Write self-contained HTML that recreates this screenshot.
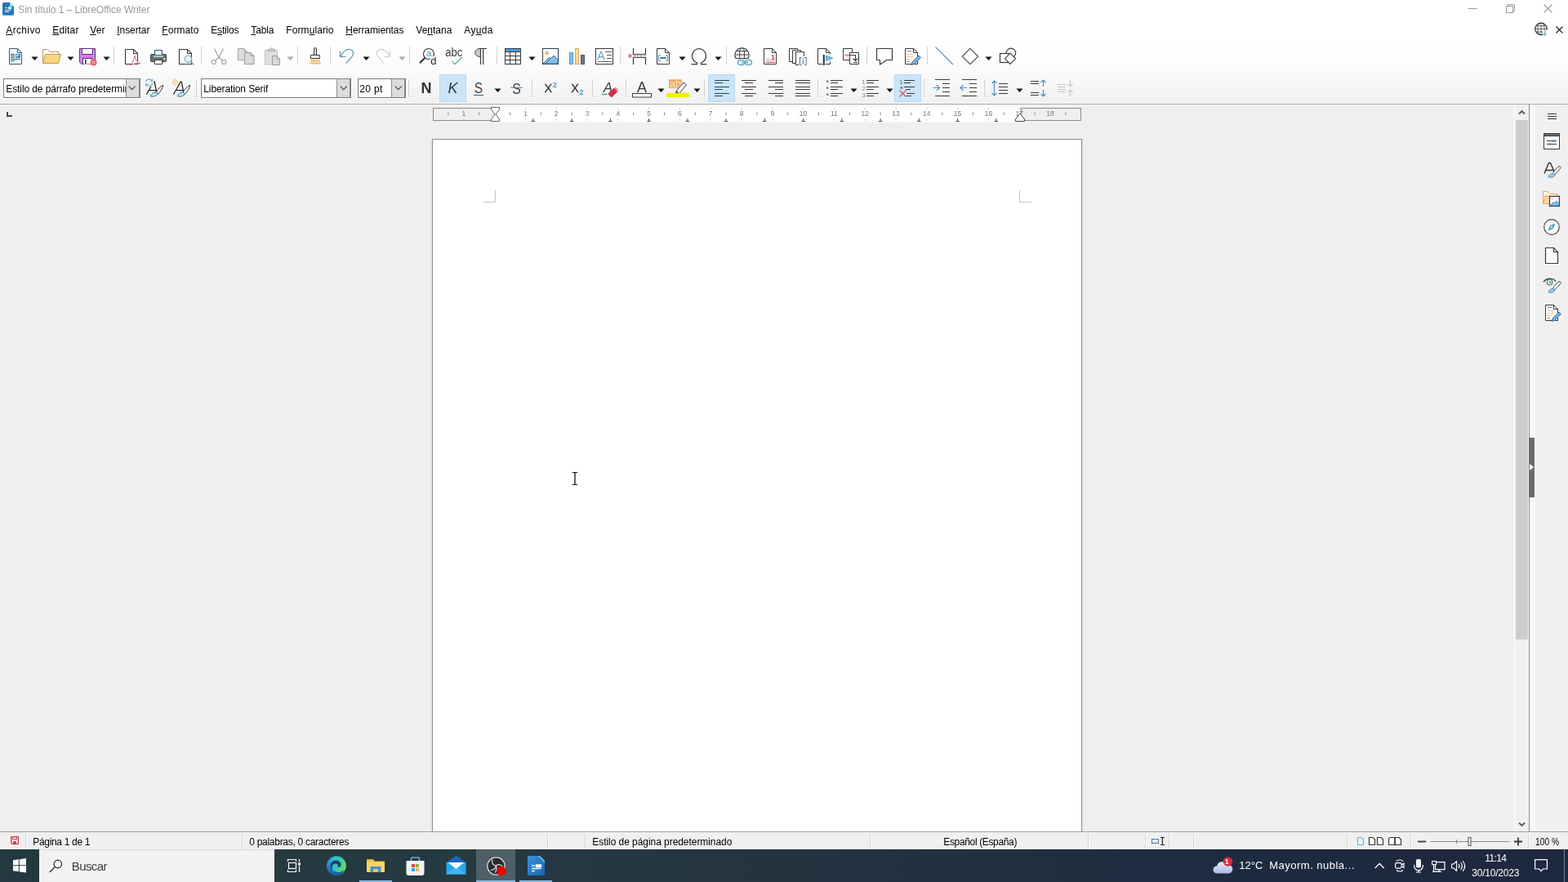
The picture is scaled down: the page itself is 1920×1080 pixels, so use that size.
<!DOCTYPE html>
<html lang="es"><head><meta charset="utf-8"><title>Sin título 1 – LibreOffice Writer</title>
<style>

*{box-sizing:border-box;margin:0;padding:0}
html,body{width:1920px;height:1080px;overflow:hidden;background:#fff;font-family:"Liberation Sans",sans-serif;}
body{position:relative}
.a{position:absolute}
.t{position:absolute;white-space:pre;}
.i{position:absolute;overflow:visible}
.sep{position:absolute;width:1px;background:#d2d2d2}
.hl{position:absolute;background:#cce4f7;border:1px solid #b9d8f1}
.combo{position:absolute;height:24px;background:#fff;border:1px solid #7a7a7a;box-shadow:0 0 0 1px rgba(255,255,255,.7)}
.combo .btn{position:absolute;right:0;top:0;bottom:0;width:17px;background:#dcdcdc;border-left:1px solid #909090;border-right:1px solid #8a8a8a}
.ssep{position:absolute;top:1021px;height:18px;width:2px;background:linear-gradient(90deg,#d4d4d4 50%,#fafafa 50%)}

</style></head>
<body>
<div class="a" style="left:0;top:50px;width:1920px;height:77px;background:linear-gradient(#ffffff 0%,#fdfdfd 30%,#f8f8f8 65%,#f0f0f0 100%)"></div><div class="a" style="left:0;top:125px;width:1920px;height:2px;background:#f6f6f6"></div><div class="a" style="left:0;top:127px;width:1920px;height:1px;background:#a8a8a8"></div><div class="a" style="left:0;top:128px;width:1920px;height:891px;background:#efefef"></div><div class="a" style="left:0;top:128px;width:1920px;height:1px;background:#f5f5f5"></div><div class="sep" style="left:139px;top:57px;height:22px"></div><div class="sep" style="left:246px;top:57px;height:22px"></div><div class="sep" style="left:364px;top:57px;height:22px"></div><div class="sep" style="left:404px;top:57px;height:22px"></div><div class="sep" style="left:501px;top:57px;height:22px"></div><div class="sep" style="left:608px;top:57px;height:22px"></div><div class="sep" style="left:759px;top:57px;height:22px"></div><div class="sep" style="left:889px;top:57px;height:22px"></div><div class="sep" style="left:1061px;top:57px;height:22px"></div><div class="sep" style="left:1135px;top:57px;height:22px"></div><div class="sep" style="left:240px;top:97px;height:22px"></div><div class="sep" style="left:500px;top:97px;height:22px"></div><div class="sep" style="left:651px;top:97px;height:22px"></div><div class="sep" style="left:725px;top:97px;height:22px"></div><div class="sep" style="left:766px;top:97px;height:22px"></div><div class="sep" style="left:862px;top:97px;height:22px"></div><div class="sep" style="left:1001px;top:97px;height:22px"></div><div class="sep" style="left:1131px;top:97px;height:22px"></div><div class="sep" style="left:1205px;top:97px;height:22px"></div><div class="hl" style="left:538px;top:91px;width:33px;height:34px"></div><div class="hl" style="left:867px;top:91px;width:33px;height:34px"></div><div class="hl" style="left:1095px;top:91px;width:33px;height:34px"></div><div class="combo" style="left:4px;top:96px;width:168px"><div class="btn"></div></div><div class="combo" style="left:246px;top:96px;width:184px"><div class="btn"></div></div><div class="combo" style="left:438px;top:96px;width:59px"><div class="btn"></div></div><div class="a" style="left:529px;top:170px;width:796px;height:849px;background:#fff;border:1px solid #8e8e8e;border-bottom:none;box-shadow:0 2px 0 2px #e5e5e5"></div><svg class="i" style="left:0;top:0" width="1856" height="300"><path d="M592 247.500h14.500v-14.500M1263 247.500h-14.500v-14.500" stroke="#c2c2c2" fill="none"/></svg><svg class="i" style="left:697.5px;top:577px" width="12" height="18" viewBox="0 0 12 18"><path d="M3 1.5h2.2l.8.8.8-.8H9M6 2v14M3 16.5h2.2l.8-.8.8.8H9" stroke="#000" stroke-width="1.2" fill="none"/></svg><div class="a" style="left:1856px;top:128px;width:16px;height:891px;background:#f0f0f0"></div><div class="a" style="left:1856px;top:147px;width:15px;height:636px;background:#cdcdcd"></div><svg class="i" style="left:1856px;top:128px" width="16" height="891"><path d="M4 11.5l3.5-3.5 3.500 3.5M4 879.5l3.5 3.5 3.5-3.5" stroke="#555" stroke-width="1.8" fill="none"/></svg><div class="a" style="left:1872px;top:128px;width:1px;height:891px;background:#8f8f8f"></div><div class="a" style="left:1873px;top:128px;width:47px;height:891px;background:#f0f0f0"></div><div class="a" style="left:1873px;top:128px;width:7px;height:891px;background:#f7f7f7"></div><div class="a" style="left:1853px;top:128px;width:3px;height:891px;background:#f5f5f5"></div><div class="a" style="left:1872px;top:536px;width:7px;height:73px;background:#6b6b6b"></div><svg class="i" style="left:1872px;top:566px" width="7" height="12"><path d="M1 2l5 4-5 4z" fill="#fff"/></svg><div class="a" style="left:0;top:1018px;width:1920px;height:1px;background:#a0a0a0"></div><div class="a" style="left:0;top:1019px;width:1920px;height:21px;background:#f0f0f0"></div><div class="ssep" style="left:31px"></div><div class="ssep" style="left:296px"></div><div class="ssep" style="left:670px"></div><div class="ssep" style="left:716px"></div><div class="ssep" style="left:1065px"></div><div class="ssep" style="left:1332px"></div><div class="ssep" style="left:1402px"></div><div class="ssep" style="left:1431px"></div><div class="ssep" style="left:1461px"></div><div class="ssep" style="left:1649px"></div><div class="ssep" style="left:1727px"></div><div class="ssep" style="left:1871px"></div><div class="a" style="left:0;top:1040px;width:1920px;height:40px;background:linear-gradient(90deg,#243840 0%,#263a42 30%,#22303f 60%,#1e2a40 80%,#1e2840 100%)"></div><div class="a" style="left:48px;top:1040px;width:288px;height:40px;background:#f2f2f2;border-top:1px solid #dcdcdc"></div><div class="a" style="left:583px;top:1040px;width:48px;height:40px;background:#4e5f67"></div><div class="a" style="left:440px;top:1078px;width:40px;height:2px;background:#8fb9e0"></div><div class="a" style="left:583px;top:1078px;width:48px;height:2px;background:#8fb9e0"></div><div class="a" style="left:636px;top:1078px;width:40px;height:2px;background:#8fb9e0"></div><div class="a" style="left:1915px;top:1040px;width:1px;height:40px;background:#7a8290"></div>
<div id="tx" style="position:absolute;left:0;top:0;width:1920px;height:1080px;will-change:transform">
<svg class="i" style="left:0;top:128px" width="1856" height="30" viewBox="0 128 1856 30"><rect x="606" y="128" width="643" height="22" fill="#f6f6f6"/><rect x="606" y="130.5" width="643" height="18.500" fill="#fff"/><rect x="530.5" y="132.5" width="75" height="15" fill="#efefef" stroke="#8c8c8c"/><rect x="1250.5" y="132.5" width="73" height="15" fill="#efefef" stroke="#8c8c8c"/><rect x="548.4" y="137.500" width="1" height="3.500" fill="#8a8a8a"/><text x="567.8" y="142" font-size="8.500" fill="#7a7a7a" text-anchor="middle" font-family="Liberation Sans, sans-serif">1</text><rect x="567.3" y="132" width="1" height="1.5" fill="#b0b0b0"/><rect x="567.3" y="146" width="1" height="1.5" fill="#b0b0b0"/><rect x="586.2" y="137.500" width="1" height="3.500" fill="#8a8a8a"/><rect x="624.0" y="137.500" width="1" height="3.500" fill="#8a8a8a"/><text x="643.4" y="142" font-size="8.500" fill="#7a7a7a" text-anchor="middle" font-family="Liberation Sans, sans-serif">1</text><rect x="642.9" y="132" width="1" height="1.5" fill="#b0b0b0"/><rect x="642.9" y="146" width="1" height="1.5" fill="#b0b0b0"/><rect x="661.8" y="137.500" width="1" height="3.500" fill="#8a8a8a"/><text x="681.2" y="142" font-size="8.500" fill="#7a7a7a" text-anchor="middle" font-family="Liberation Sans, sans-serif">2</text><rect x="680.7" y="132" width="1" height="1.5" fill="#b0b0b0"/><rect x="680.7" y="146" width="1" height="1.5" fill="#b0b0b0"/><rect x="699.6" y="137.500" width="1" height="3.500" fill="#8a8a8a"/><text x="719.0" y="142" font-size="8.500" fill="#7a7a7a" text-anchor="middle" font-family="Liberation Sans, sans-serif">3</text><rect x="718.5" y="132" width="1" height="1.5" fill="#b0b0b0"/><rect x="718.5" y="146" width="1" height="1.5" fill="#b0b0b0"/><rect x="737.4" y="137.500" width="1" height="3.500" fill="#8a8a8a"/><text x="756.8" y="142" font-size="8.500" fill="#7a7a7a" text-anchor="middle" font-family="Liberation Sans, sans-serif">4</text><rect x="756.3" y="132" width="1" height="1.5" fill="#b0b0b0"/><rect x="756.3" y="146" width="1" height="1.5" fill="#b0b0b0"/><rect x="775.2" y="137.500" width="1" height="3.500" fill="#8a8a8a"/><text x="794.6" y="142" font-size="8.500" fill="#7a7a7a" text-anchor="middle" font-family="Liberation Sans, sans-serif">5</text><rect x="794.1" y="132" width="1" height="1.5" fill="#b0b0b0"/><rect x="794.1" y="146" width="1" height="1.5" fill="#b0b0b0"/><rect x="813.0" y="137.500" width="1" height="3.500" fill="#8a8a8a"/><text x="832.4" y="142" font-size="8.500" fill="#7a7a7a" text-anchor="middle" font-family="Liberation Sans, sans-serif">6</text><rect x="831.9" y="132" width="1" height="1.5" fill="#b0b0b0"/><rect x="831.9" y="146" width="1" height="1.5" fill="#b0b0b0"/><rect x="850.8" y="137.500" width="1" height="3.500" fill="#8a8a8a"/><text x="870.2" y="142" font-size="8.500" fill="#7a7a7a" text-anchor="middle" font-family="Liberation Sans, sans-serif">7</text><rect x="869.7" y="132" width="1" height="1.5" fill="#b0b0b0"/><rect x="869.7" y="146" width="1" height="1.5" fill="#b0b0b0"/><rect x="888.6" y="137.500" width="1" height="3.500" fill="#8a8a8a"/><text x="908.0" y="142" font-size="8.500" fill="#7a7a7a" text-anchor="middle" font-family="Liberation Sans, sans-serif">8</text><rect x="907.5" y="132" width="1" height="1.5" fill="#b0b0b0"/><rect x="907.5" y="146" width="1" height="1.5" fill="#b0b0b0"/><rect x="926.4" y="137.500" width="1" height="3.500" fill="#8a8a8a"/><text x="945.8" y="142" font-size="8.500" fill="#7a7a7a" text-anchor="middle" font-family="Liberation Sans, sans-serif">9</text><rect x="945.3" y="132" width="1" height="1.5" fill="#b0b0b0"/><rect x="945.3" y="146" width="1" height="1.5" fill="#b0b0b0"/><rect x="964.2" y="137.500" width="1" height="3.500" fill="#8a8a8a"/><text x="983.6" y="142" font-size="8.500" fill="#7a7a7a" text-anchor="middle" font-family="Liberation Sans, sans-serif">10</text><rect x="983.1" y="132" width="1" height="1.5" fill="#b0b0b0"/><rect x="983.1" y="146" width="1" height="1.5" fill="#b0b0b0"/><rect x="1002.0" y="137.500" width="1" height="3.500" fill="#8a8a8a"/><text x="1021.4" y="142" font-size="8.500" fill="#7a7a7a" text-anchor="middle" font-family="Liberation Sans, sans-serif">11</text><rect x="1020.9" y="132" width="1" height="1.5" fill="#b0b0b0"/><rect x="1020.9" y="146" width="1" height="1.5" fill="#b0b0b0"/><rect x="1039.8" y="137.500" width="1" height="3.500" fill="#8a8a8a"/><text x="1059.2" y="142" font-size="8.500" fill="#7a7a7a" text-anchor="middle" font-family="Liberation Sans, sans-serif">12</text><rect x="1058.7" y="132" width="1" height="1.5" fill="#b0b0b0"/><rect x="1058.7" y="146" width="1" height="1.5" fill="#b0b0b0"/><rect x="1077.6" y="137.500" width="1" height="3.500" fill="#8a8a8a"/><text x="1097.0" y="142" font-size="8.500" fill="#7a7a7a" text-anchor="middle" font-family="Liberation Sans, sans-serif">13</text><rect x="1096.5" y="132" width="1" height="1.5" fill="#b0b0b0"/><rect x="1096.5" y="146" width="1" height="1.5" fill="#b0b0b0"/><rect x="1115.4" y="137.500" width="1" height="3.500" fill="#8a8a8a"/><text x="1134.8" y="142" font-size="8.500" fill="#7a7a7a" text-anchor="middle" font-family="Liberation Sans, sans-serif">14</text><rect x="1134.3" y="132" width="1" height="1.5" fill="#b0b0b0"/><rect x="1134.3" y="146" width="1" height="1.5" fill="#b0b0b0"/><rect x="1153.2" y="137.500" width="1" height="3.500" fill="#8a8a8a"/><text x="1172.6" y="142" font-size="8.500" fill="#7a7a7a" text-anchor="middle" font-family="Liberation Sans, sans-serif">15</text><rect x="1172.1" y="132" width="1" height="1.5" fill="#b0b0b0"/><rect x="1172.1" y="146" width="1" height="1.5" fill="#b0b0b0"/><rect x="1191.0" y="137.500" width="1" height="3.500" fill="#8a8a8a"/><text x="1210.4" y="142" font-size="8.500" fill="#7a7a7a" text-anchor="middle" font-family="Liberation Sans, sans-serif">16</text><rect x="1209.9" y="132" width="1" height="1.5" fill="#b0b0b0"/><rect x="1209.9" y="146" width="1" height="1.5" fill="#b0b0b0"/><rect x="1228.8" y="137.500" width="1" height="3.500" fill="#8a8a8a"/><text x="1248.2" y="142" font-size="8.500" fill="#7a7a7a" text-anchor="middle" font-family="Liberation Sans, sans-serif">17</text><rect x="1247.7" y="132" width="1" height="1.5" fill="#b0b0b0"/><rect x="1247.7" y="146" width="1" height="1.5" fill="#b0b0b0"/><rect x="1266.6" y="137.500" width="1" height="3.500" fill="#8a8a8a"/><text x="1286.0" y="142" font-size="8.500" fill="#7a7a7a" text-anchor="middle" font-family="Liberation Sans, sans-serif">18</text><rect x="1285.5" y="132" width="1" height="1.5" fill="#b0b0b0"/><rect x="1285.5" y="146" width="1" height="1.5" fill="#b0b0b0"/><rect x="1304.4" y="137.500" width="1" height="3.500" fill="#8a8a8a"/><path d="M650.6 148.5h4.400M652.9 145v3.500" stroke="#4a4a4a" stroke-width="1" fill="none"/><path d="M697.9 148.5h4.400M700.1 145v3.500" stroke="#4a4a4a" stroke-width="1" fill="none"/><path d="M745.1 148.5h4.400M747.4 145v3.500" stroke="#4a4a4a" stroke-width="1" fill="none"/><path d="M792.4 148.5h4.400M794.6 145v3.500" stroke="#4a4a4a" stroke-width="1" fill="none"/><path d="M839.6 148.5h4.400M841.9 145v3.500" stroke="#4a4a4a" stroke-width="1" fill="none"/><path d="M886.9 148.5h4.400M889.1 145v3.500" stroke="#4a4a4a" stroke-width="1" fill="none"/><path d="M934.1 148.5h4.400M936.4 145v3.500" stroke="#4a4a4a" stroke-width="1" fill="none"/><path d="M981.4 148.5h4.400M983.6 145v3.500" stroke="#4a4a4a" stroke-width="1" fill="none"/><path d="M1028.6 148.5h4.400M1030.8 145v3.500" stroke="#4a4a4a" stroke-width="1" fill="none"/><path d="M1075.9 148.5h4.400M1078.1 145v3.500" stroke="#4a4a4a" stroke-width="1" fill="none"/><path d="M1123.1 148.5h4.400M1125.3 145v3.500" stroke="#4a4a4a" stroke-width="1" fill="none"/><path d="M1170.4 148.5h4.400M1172.6 145v3.500" stroke="#4a4a4a" stroke-width="1" fill="none"/><path d="M1217.6 148.5h4.400M1219.8 145v3.500" stroke="#4a4a4a" stroke-width="1" fill="none"/><path d="M601.5 131.5h10v2.5l-4.5 6 4.5 6v2.5h-10v-2.5l4.5-6-4.5-6z" fill="#fff" stroke="#555" stroke-width="0.900" stroke-linejoin="round"/><path d="M1243.5 148.5h11v-2.5l-5-6.5h-1l-5 6.5z" fill="#fff" stroke="#444" stroke-width="1" stroke-linejoin="round"/><path d="M9 137v5h6" stroke="#484848" stroke-width="2" fill="none"/></svg>
<svg class="i" style="left:7px;top:57px" width="24" height="24" viewBox="0 0 24 24"><path d="M4.5 2.5h10l5 5v14h-15z" fill="#eef7fd" stroke="#2f5f7e"/><path d="M14.5 2.5v5h5" fill="none" stroke="#2f5f7e"/><path d="M6 9.5h5M6 11.5h5M6 13.5h5M6 15.5h12M6 17.5h5" stroke="#2f5f7e" fill="none"/><rect x="12.5" y="9.5" width="5" height="4" fill="#cfe6f7" stroke="#4a86b4"/><path d="M13 13l4-3.500v3.500z" fill="#4a86b4"/></svg>
<svg class="i" style="left:51px;top:57px" width="24" height="24" viewBox="0 0 24 24"><path d="M1.5 20.5v-17h5l4 3h10v3" fill="#fdfdfd" stroke="#b59a78"/><path d="M1.5 20.5l3-11h19l-3 11z" fill="#f9d57f" stroke="#c8964e" stroke-linejoin="round"/></svg>
<svg class="i" style="left:95px;top:57px" width="24" height="24" viewBox="0 0 24 24"><path d="M2.500 2.500h19v19h-16.500l-2.500-2.500z" fill="#d27be0" stroke="#5e2f75" stroke-linejoin="round"/><path d="M3 3h2.500v16h-2.500zM18.500 3h2.500v12h-2.500z" fill="#c595e8"/><path d="M5.500 2.500h13v7h-13z" fill="#fdf3fd" stroke="#5e2f75"/><path d="M6.500 21.500v-7h11v7" fill="#fff" stroke="#5e2f75"/><path d="M9.800 16v5" stroke="#4a2560" stroke-width="1.600"/><circle cx="19.600" cy="19.500" r="4" fill="#ea6468"/><circle cx="19.600" cy="19.500" r="2.100" fill="#f5a8a0"/><circle cx="19.600" cy="19.500" r="0.900" fill="#ea6468"/></svg>
<svg class="i" style="left:149px;top:57px" width="24" height="24" viewBox="0 0 24 24"><path d="M4.5 3.5h10l5 5v13h-15z" fill="#fff" stroke="#3a3a38" stroke-width="1.100"/><path d="M14.5 3.5v5h5" fill="none" stroke="#3a3a38" stroke-width="1.100"/><path d="M10.500 23c2.500-2.500 5-7.500 5.500-12c0.300 4 2 8 7 10c-4-1-9.500 0-12.500 2z" fill="#fff" stroke="#d9607a" stroke-width="1" stroke-linejoin="round"/></svg>
<svg class="i" style="left:182px;top:57px" width="24" height="24" viewBox="0 0 24 24"><path d="M7.500 10v-5.500h9v5.500" fill="#e8f4fb" stroke="#3a3a38"/><rect x="2.500" y="9.500" width="19" height="9" rx="0.800" fill="#6e6e6e" stroke="#3f4a4e"/><path d="M3 10h18v2h-18z" fill="#3f7f86"/><path d="M6 11.300h12v1.500h-12z" fill="#bfe8ee"/><path d="M7.500 10v-5.500h9v5.500" fill="#e8f4fb" stroke="#3a5a66"/><rect x="18" y="14.500" width="2.500" height="1.500" fill="#fff"/><path d="M7.500 16.500h9v5h-9z" fill="#fff" stroke="#3a3a38"/></svg>
<svg class="i" style="left:215px;top:57px" width="24" height="24" viewBox="0 0 24 24"><path d="M4.5 3.5h10l5 5v13h-15z" fill="#fff" stroke="#3a3a38" stroke-width="1.100"/><path d="M14.5 3.5v5h5" fill="none" stroke="#3a3a38" stroke-width="1.100"/><circle cx="15.400" cy="15.200" r="4.200" fill="#e3f3f8" stroke="#7da7b8" stroke-width="1.200"/><path d="M18.400 18.200l4.300 4.300" stroke="#7da7b8" stroke-width="1.300"/></svg>
<svg class="i" style="left:256px;top:57px" width="24" height="24" viewBox="0 0 24 24"><path d="M6.500 2.700l5.500 10.600 4.300 3.800M17.500 2.700l-5.500 10.600-4.300 3.800" stroke="#a9a9a9" stroke-width="1.400" fill="none" stroke-linejoin="round"/><circle cx="5.800" cy="18.900" r="2.600" fill="#fdfdfd" stroke="#a9a9a9" stroke-width="1.200"/><circle cx="18.200" cy="18.900" r="2.600" fill="#fdfdfd" stroke="#a9a9a9" stroke-width="1.200"/></svg>
<svg class="i" style="left:288.5px;top:57px" width="24" height="24" viewBox="0 0 24 24"><path d="M2.500 2.500h7.500l3.500 3.500v10.500h-11z" fill="#dcdcdc" stroke="#a2a2a2"/><path d="M10 2.500v3.500h3.500" fill="none" stroke="#b5b5b5"/><path d="M10.500 7.500h7.500l4 4v10h-11.500z" fill="#dadada" stroke="#9a9a9a"/><path d="M18 7.500v4h4" fill="none" stroke="#9a9a9a"/></svg>
<svg class="i" style="left:321px;top:57px" width="24" height="24" viewBox="0 0 24 24"><path d="M3.500 4.500h15v17.500h-15z" fill="#dedede" stroke="#c2c2c2"/><path d="M7.500 5.500v-2h2.200c0-2.200 3.600-2.200 3.600 0h2.200v2z" fill="#cfcfcf" stroke="#a8a8a8"/><path d="M12.500 11.500h5.500l3.500 3.500v7.500h-9z" fill="#d8d8d8" stroke="#9c9c9c"/><path d="M18 11.500v3.500h3.500" fill="none" stroke="#9c9c9c"/></svg>
<svg class="i" style="left:373.7px;top:57px" width="24" height="24" viewBox="0 0 24 24"><path d="M10.500 10.500v-7.500a1.500 1.500 0 0 1 3 0v7.500" fill="#d8d8d8" stroke="#3a3a38"/><path d="M6.500 10.500h11v4h-11z" fill="#fff" stroke="#3a3a38" stroke-linejoin="round"/><path d="M6.500 15h11l1 7h-13z" fill="#f9d9b0"/><path d="M6 17.500h12.200M5.600 20.500h13" stroke="#efb273" stroke-width="1.200"/></svg>
<svg class="i" style="left:413px;top:57px" width="24" height="24" viewBox="0 0 24 24"><path d="M3.500 5.500v7h7" fill="none" stroke="#5d8eae" stroke-width="1.150"/><path d="M3.800 12.200c3-6 8-10 12.500-8.500c4.500 1.600 4 6.500 1 9.500l-6.500 7.500" fill="none" stroke="#5d8eae" stroke-width="1.150"/></svg>
<svg class="i" style="left:457px;top:57px" width="24" height="24" viewBox="0 0 24 24"><path d="M20.500 5.500v7h-7" fill="none" stroke="#cdcdcd" stroke-width="1.150"/><path d="M20.200 12.200c-3-6-8-10-12.500-8.500c-4.500 1.600-4 6.500-1 9.500l6.500 7.500" fill="none" stroke="#cdcdcd" stroke-width="1.150"/></svg>
<svg class="i" style="left:511px;top:57px" width="24" height="24" viewBox="0 0 24 24"><circle cx="14" cy="9" r="6.500" fill="#fff" stroke="#3a3a38" stroke-width="1.200"/><path d="M9.300 13.800l-6.300 6.400" stroke="#3a3a38" stroke-width="2.200"/><text x="14.300" y="12" font-size="11.500" text-anchor="middle" fill="#3f8ea8" font-family="Liberation Sans, sans-serif">a</text><rect x="16" y="12" width="8" height="10" fill="#fcfcfc"/><text x="19.800" y="21.500" font-size="13" text-anchor="middle" fill="#222" font-family="Liberation Sans, sans-serif">d</text></svg>
<svg class="i" style="left:543.5px;top:57px" width="24" height="24" viewBox="0 0 24 24"><text transform="translate(11.800 11.600) scale(0.900 1)" font-size="14.500" text-anchor="middle" fill="#3a3a38" font-family="Liberation Sans, sans-serif">abc</text><path d="M9.500 18l3.500 3.500l9-8.500" fill="none" stroke="#68b98c" stroke-width="1.400"/></svg>
<svg class="i" style="left:577px;top:57px" width="24" height="24" viewBox="0 0 24 24"><path d="M11.500 12.500c-9 0-9-10 0-10z" fill="#c9c9c9" stroke="#3a3a38"/><path d="M9 2.500h10M11.500 2.500v19.500M14.700 2.500v19.500" stroke="#3a3a38" fill="none" stroke-width="1.200"/></svg>
<svg class="i" style="left:616px;top:57px" width="24" height="24" viewBox="0 0 24 24"><rect x="2.500" y="2.500" width="19" height="19" fill="#fff" stroke="#3a3a38"/><rect x="3" y="3" width="18" height="3" fill="#4b9ad6"/><path d="M2.500 6.500h19M2.500 11.500h19M2.500 16.500h19M8.500 6.500v15M15.500 6.500v15" stroke="#3a3a38" fill="none"/></svg>
<svg class="i" style="left:662px;top:57px" width="24" height="24" viewBox="0 0 24 24"><rect x="2.500" y="2.500" width="19" height="19" fill="#fcfdff" stroke="#2f3f4e"/><circle cx="7.700" cy="8" r="2" fill="#f6d9a6" stroke="#c9a064"/><path d="M3 21l7.500-8 2 2 3.500-4 5 5v5z" fill="#83beec" stroke="#3d74a4" stroke-linejoin="round"/><path d="M6 21l7-7" stroke="#3d74a4" fill="none"/></svg>
<svg class="i" style="left:694.3px;top:57px" width="24" height="24" viewBox="0 0 24 24"><rect x="3.500" y="7.500" width="4" height="14" fill="#83beec" stroke="#4a98d3"/><rect x="10.500" y="2.500" width="4" height="19" fill="#f8db9f" stroke="#e3a95c"/><rect x="17.500" y="10.500" width="4" height="11" fill="#75757d" stroke="#54545c"/></svg>
<svg class="i" style="left:728px;top:57px" width="24" height="24" viewBox="0 0 24 24"><rect x="1.500" y="2.500" width="21" height="19" fill="#fcfeff" stroke="#3a3a38"/><text x="8" y="16" font-size="14" text-anchor="middle" fill="#6a9dbb" font-family="Liberation Sans, sans-serif">A</text><path d="M13 6.500h8M15 10.500h6M15 14.500h6M4 18.500h17" stroke="#55606a" fill="none"/></svg>
<svg class="i" style="left:768px;top:57px" width="24" height="24" viewBox="0 0 24 24"><path d="M7.500 2v7.500h15v-7.500M7.500 22v-8.500h15v8.500" fill="none" stroke="#3a3a38" stroke-width="1.200"/><path d="M8 11.500h15" stroke="#a83246" stroke-dasharray="2.500 1.500" fill="none"/><path d="M2.300 9.200l3.500 2.300-3.500 2.300z" fill="#f4b6bd" stroke="#d24a5c"/></svg>
<svg class="i" style="left:800px;top:57px" width="24" height="24" viewBox="0 0 24 24"><path d="M4.5 2.5h10l5 5v14h-15z" fill="#fff" stroke="#3a3a38"/><path d="M14.5 2.5v5h5" fill="none" stroke="#3a3a38"/><path d="M9 10.500h-1.500a1 1 0 0 0-1 1v5a1 1 0 0 0 1 1h1.500M15 10.500h1.500a1 1 0 0 1 1 1v5a1 1 0 0 1-1 1h-1.500" fill="none" stroke="#5b9ab2" stroke-width="1.200"/><path d="M8.300 14h7.400" stroke="#3f7f97" stroke-width="2.100"/></svg>
<svg class="i" style="left:844px;top:57px" width="24" height="24" viewBox="0 0 24 24"><path d="M2.500 21.500h7v-1.500c-3.500-1.500-6-4.500-6-8.500c0-5 4-9 8.500-9s8.500 4 8.500 9c0 4-2.500 7-6 8.500v1.500h7" fill="none" stroke="#3a3a38" stroke-width="1.250"/></svg>
<svg class="i" style="left:898px;top:57px" width="24" height="24" viewBox="0 0 24 24"><path d="M3.100 14.500a8.500 8.500 0 1 1 14.800 0z" fill="#fff" stroke="#3a3a38" stroke-width="1.200"/><path d="M2.800 10h15.400M4.500 5.600h12M9.500 2.200c-1.500 1.500-1.800 3-1.800 5v7.300M11.500 2.200c1.500 1.500 1.900 3 1.900 5v7.300" fill="none" stroke="#3a3a38"/><rect x="5.500" y="16.500" width="8" height="6" rx="3" fill="#dff1f7" stroke="#6badc4" stroke-width="1.300"/><rect x="14.500" y="16.500" width="8" height="6" rx="3" fill="#dff1f7" stroke="#6badc4" stroke-width="1.300"/><path d="M10 19.500h8" stroke="#6badc4" stroke-width="1.500"/></svg>
<svg class="i" style="left:931px;top:57px" width="24" height="24" viewBox="0 0 24 24"><path d="M4.5 2.5h10l5 5v14h-15z" fill="#fff" stroke="#3a3a38"/><path d="M14.5 2.5v5h5" fill="none" stroke="#3a3a38"/><text x="15.400" y="15.500" font-size="9.500" font-weight="700" text-anchor="middle" fill="#c9475e" font-family="Liberation Sans, sans-serif">1</text><path d="M7 15.500h5" stroke="#b9b9b9"/><path d="M7 17.500h11" stroke="#e8a3ae"/><path d="M7 19.500h11" stroke="#c9475e"/></svg>
<svg class="i" style="left:964px;top:57px" width="24" height="24" viewBox="0 0 24 24"><path d="M2.500 2.500h10v16h-10z" fill="#fff" stroke="#3a3a38"/><path d="M6.500 4.500h10v16h-10z" fill="#fff" stroke="#3a3a38"/><path d="M10.500 6.500h10v16h-10z" fill="#fff" stroke="#3a3a38"/><rect x="14" y="12" width="10" height="12" fill="#f7fbfe"/><path d="M17.500 13.500h-2v9h2M21.200 13.500h2v9h-2" fill="none" stroke="#5f7f96" stroke-width="1.100"/><path d="M19.400 16.500v5M19.400 14v1.300" stroke="#5f7f96" stroke-width="1.200"/></svg>
<svg class="i" style="left:997px;top:57px" width="24" height="24" viewBox="0 0 24 24"><path d="M4.5 2.5h10l5 5v14h-15z" fill="#fff" stroke="#3a3a38"/><path d="M14.5 2.5v5h5" fill="none" stroke="#3a3a38"/><rect x="10" y="9.500" width="14" height="8.800" fill="#fbfdff"/><rect x="10" y="18" width="4" height="5" fill="#fbfdff"/><path d="M11.800 10v13" stroke="#2c2c2c" stroke-width="2"/><path d="M14.600 11.200l8 3.100-8 3.100z" fill="#83beec" stroke="#4a98d3"/></svg>
<svg class="i" style="left:1030px;top:57px" width="24" height="24" viewBox="0 0 24 24"><path d="M2.500 2.500h11v14h-11z" fill="#fff" stroke="#3a3a38"/><path d="M4.500 12.500h5" stroke="#f2c0c7"/><path d="M10.500 7.500h11v14h-11z" fill="#fff" stroke="#3a3a38"/><path d="M4.500 10.500h6" stroke="#d8566c" stroke-width="1.200"/><path d="M10.500 10.500h7v6.500M14.500 14.500l3 3 3-3M15 19.500h5" fill="none" stroke="#3a3a38" stroke-width="1.100"/></svg>
<svg class="i" style="left:1071px;top:57px" width="24" height="24" viewBox="0 0 24 24"><path d="M2.500 2.500h19v14h-7l-8 5.500v-5.500h-4z" fill="#fff" stroke="#3a3a38" stroke-width="1.200" stroke-linejoin="round"/></svg>
<svg class="i" style="left:1104px;top:57px" width="24" height="24" viewBox="0 0 24 24"><path d="M4.5 2.5h10l5 5v14h-15z" fill="#fff" stroke="#3a3a38"/><path d="M14.5 2.5v5h5" fill="none" stroke="#3a3a38"/><path d="M7 5.500h5M7 18.500h3" stroke="#7a7a7a"/><path d="M7 9.500h8M7 12.500h7M7 15.500h5" stroke="#f0b070" stroke-dasharray="3 1"/><path d="M12 22.500l1-3.500 8-8 2.500 2.500-8 8z" fill="#7db0dc" stroke="#3f77a8" stroke-linejoin="round"/></svg>
<svg class="i" style="left:1144px;top:57px" width="24" height="24" viewBox="0 0 24 24"><path d="M1.400 0.300l21.500 21.700" stroke="#5a93b8" stroke-width="1.150"/></svg>
<svg class="i" style="left:1176px;top:57px" width="24" height="24" viewBox="0 0 24 24"><path d="M12 2.300l9.700 9.700-9.700 9.700-9.700-9.700z" fill="#fff" stroke="#555" stroke-width="1.200"/></svg>
<svg class="i" style="left:1222px;top:57px" width="24" height="24" viewBox="0 0 24 24"><circle cx="15.900" cy="7.900" r="5.800" fill="#fff" stroke="#3a3a38" stroke-width="1.100"/><rect x="2.500" y="8.500" width="11.500" height="11" fill="#fff" stroke="#3a3a38" stroke-width="1.200"/><path d="M15 8.200l6.600 6.600-6.600 6.600-6.600-6.600z" fill="#fff" stroke="#3a3a38" stroke-width="1.100"/></svg>
<svg class="i" style="left:177px;top:96px" width="24" height="24" viewBox="0 0 24 24"><path d="M2.300 19.700l8.900-15.500h1l2.400 11.800M6 14.600h8" fill="none" stroke="#2b2b2b" stroke-width="1.300"/><path d="M22.700 8.200c-4.200 2.300-7.200 5.800-8.400 9.100l2.200 1.700c3-2.500 5.500-6.500 6.200-10.800z" fill="#fff" stroke="#2b2b2b"/><path d="M14.200 17c-3.200-0.500-5.700 2-7 4.900c3.800 0.900 7.800-0.100 9.100-2.900z" fill="#c2e0f3" stroke="#2f79a8"/><circle cx="5.600" cy="5.100" r="5.600" fill="#fbfbfb"/><path d="M1.500 4.500a4.200 4.200 0 0 1 7.500-1.800M9.700 5.700a4.200 4.200 0 0 1-7.500 1.800" fill="none" stroke="#7fb5c9" stroke-width="1.300"/><path d="M9.600 0.500v2.800h-2.800M1.600 9.700v-2.800h2.800" fill="none" stroke="#7fb5c9" stroke-width="1.200"/></svg>
<svg class="i" style="left:210px;top:96px" width="24" height="24" viewBox="0 0 24 24"><path d="M2.300 19.700l8.900-15.500h1l2.400 11.800M6 14.600h8" fill="none" stroke="#2b2b2b" stroke-width="1.300"/><path d="M22.700 8.200c-4.200 2.300-7.200 5.800-8.400 9.100l2.200 1.700c3-2.500 5.500-6.500 6.200-10.800z" fill="#fff" stroke="#2b2b2b"/><path d="M14.200 17c-3.200-0.500-5.700 2-7 4.900c3.800 0.900 7.800-0.100 9.100-2.900z" fill="#c2e0f3" stroke="#2f79a8"/><circle cx="4.300" cy="4.400" r="4.800" fill="#fbfbfb"/><path d="M4.300 0v8.800M0 4.400h8.600M1.200 1.300l6.200 6.200M7.400 1.300l-6.200 6.200" stroke="#f0b070" stroke-width="1"/><circle cx="4.300" cy="4.400" r="1.800" fill="#fde3c0"/></svg>
<svg class="i" style="left:510px;top:96px" width="24" height="24" viewBox="0 0 24 24"><text x="12" y="18.300" font-size="18" font-weight="700" text-anchor="middle" fill="#333" font-family="Liberation Sans, sans-serif">N</text></svg>
<svg class="i" style="left:542.5px;top:96px" width="24" height="24" viewBox="0 0 24 24"><text x="11.500" y="18.300" font-size="18" font-style="italic" text-anchor="middle" fill="#2d3c4a" font-family="Liberation Sans, sans-serif">K</text></svg>
<svg class="i" style="left:574px;top:96px" width="24" height="24" viewBox="0 0 24 24"><text transform="translate(12 18.400) scale(0.840 1)" font-size="18.500" text-anchor="middle" fill="#3a3a38" font-family="Liberation Sans, sans-serif">S</text><path d="M6 20.500h12" stroke="#3a6f90" stroke-width="1.200"/></svg>
<svg class="i" style="left:620px;top:96px" width="24" height="24" viewBox="0 0 24 24"><text transform="translate(12.500 18.500) scale(0.860 1)" font-size="18.500" text-anchor="middle" fill="#3a3a38" font-family="Liberation Sans, sans-serif">S</text><path d="M5 11.300h14.500" stroke="#4f84a4" stroke-width="1.100"/></svg>
<svg class="i" style="left:662px;top:96px" width="24" height="24" viewBox="0 0 24 24"><text x="9.300" y="16.800" font-size="14.500" text-anchor="middle" fill="#3a3a38" stroke="#3a3a38" stroke-width="0.300" font-family="Liberation Sans, sans-serif">X</text><text x="17.300" y="11" font-size="9.500" font-weight="700" text-anchor="middle" fill="#4f9ac6" font-family="Liberation Sans, sans-serif">2</text></svg>
<svg class="i" style="left:695px;top:96px" width="24" height="24" viewBox="0 0 24 24"><text x="9" y="16.800" font-size="14.500" text-anchor="middle" fill="#3a3a38" stroke="#3a3a38" stroke-width="0.300" font-family="Liberation Sans, sans-serif">X</text><text x="16.800" y="19.500" font-size="9.500" font-weight="700" text-anchor="middle" fill="#4f9ac6" font-family="Liberation Sans, sans-serif">2</text></svg>
<svg class="i" style="left:735px;top:96px" width="24" height="24" viewBox="0 0 24 24"><text x="9.500" y="17" font-size="17" font-style="italic" text-anchor="middle" fill="#3a3a38" font-family="Liberation Sans, sans-serif">A</text><path d="M1.700 19.500h7" stroke="#3f8f9f" stroke-width="1.200"/><g transform="translate(-1.200 -1)"><path d="M11 20l7-7 4 4-7 7z" fill="#d42e48" stroke="#b92b44" stroke-linejoin="round"/><path d="M18 13l2-1.500 3.500 3.500-1.500 2z" fill="#f08a98"/></g></svg>
<svg class="i" style="left:774px;top:96px" width="24" height="24" viewBox="0 0 24 24"><text x="12" y="16.800" font-size="18" text-anchor="middle" fill="#3a3a38" font-family="Liberation Sans, sans-serif">A</text><rect x="0.500" y="18.500" width="23" height="4.500" fill="#fff" stroke="#3a3a38"/></svg>
<svg class="i" style="left:818px;top:96px" width="24" height="24" viewBox="0 0 24 24"><rect x="1" y="1.200" width="15.700" height="11" fill="#f1a85b"/><text x="9" y="10.800" font-size="12.500" text-anchor="middle" fill="#fbe6cf" font-family="Liberation Sans, sans-serif">ab</text><path d="M10 15.500l9-10.500 3.500 3-9 10.500z" fill="#fff" stroke="#3a3a38" stroke-linejoin="round"/><path d="M10 15.500l-2 4.500 5.500-1.500z" fill="#2b2b2b"/><rect x="-1.600" y="17.800" width="27.400" height="5.500" rx="1" fill="#f2f200"/></svg>
<svg class="i" style="left:872px;top:96px" width="24" height="24" viewBox="0 0 24 24"><rect x="3" y="2" width="18" height="1" fill="#23455f"/><rect x="3" y="5" width="10" height="1" fill="#23455f"/><rect x="3" y="10" width="18" height="1" fill="#23455f"/><rect x="3" y="13" width="10" height="1" fill="#23455f"/><rect x="3" y="18" width="18" height="1" fill="#23455f"/><rect x="3" y="21" width="10" height="1" fill="#23455f"/></svg>
<svg class="i" style="left:905px;top:96px" width="24" height="24" viewBox="0 0 24 24"><rect x="3" y="2" width="18" height="1" fill="#3a3a38"/><rect x="7" y="5" width="10" height="1" fill="#3a3a38"/><rect x="3" y="10" width="18" height="1" fill="#3a3a38"/><rect x="7" y="13" width="10" height="1" fill="#3a3a38"/><rect x="3" y="18" width="18" height="1" fill="#3a3a38"/><rect x="7" y="21" width="10" height="1" fill="#3a3a38"/></svg>
<svg class="i" style="left:938px;top:96px" width="24" height="24" viewBox="0 0 24 24"><rect x="3" y="2" width="18" height="1" fill="#3a3a38"/><rect x="11" y="5" width="10" height="1" fill="#3a3a38"/><rect x="3" y="10" width="18" height="1" fill="#3a3a38"/><rect x="11" y="13" width="10" height="1" fill="#3a3a38"/><rect x="3" y="18" width="18" height="1" fill="#3a3a38"/><rect x="11" y="21" width="10" height="1" fill="#3a3a38"/></svg>
<svg class="i" style="left:971px;top:96px" width="24" height="24" viewBox="0 0 24 24"><rect x="3" y="2" width="18" height="1" fill="#3a3a38"/><rect x="3" y="5" width="18" height="1" fill="#3a3a38"/><rect x="3" y="10" width="18" height="1" fill="#3a3a38"/><rect x="3" y="13" width="18" height="1" fill="#3a3a38"/><rect x="3" y="18" width="18" height="1" fill="#3a3a38"/><rect x="3" y="21" width="18" height="1" fill="#3a3a38"/></svg>
<svg class="i" style="left:1010px;top:96px" width="24" height="24" viewBox="0 0 24 24"><rect x="7" y="2" width="15" height="1" fill="#3a3a38"/><rect x="7" y="5" width="9" height="1" fill="#3a3a38"/><rect x="7" y="10" width="15" height="1" fill="#3a3a38"/><rect x="7" y="13" width="9" height="1" fill="#3a3a38"/><rect x="7" y="18" width="15" height="1" fill="#3a3a38"/><rect x="7" y="21" width="9" height="1" fill="#3a3a38"/><circle cx="3.200" cy="3.700" r="1.400" fill="#5b87a8"/><circle cx="3.200" cy="11.700" r="1.400" fill="#5b87a8"/><circle cx="3.200" cy="19.700" r="1.400" fill="#5b87a8"/></svg>
<svg class="i" style="left:1054px;top:96px" width="24" height="24" viewBox="0 0 24 24"><rect x="7" y="2" width="15" height="1" fill="#3a3a38"/><rect x="7" y="5" width="9" height="1" fill="#3a3a38"/><rect x="7" y="10" width="15" height="1" fill="#3a3a38"/><rect x="7" y="13" width="9" height="1" fill="#3a3a38"/><rect x="7" y="18" width="15" height="1" fill="#3a3a38"/><rect x="7" y="21" width="9" height="1" fill="#3a3a38"/><text x="3.500" y="7" font-size="7.500" text-anchor="middle" fill="#5b87a8" font-family="Liberation Sans, sans-serif">1</text><text x="3.500" y="15" font-size="7.500" text-anchor="middle" fill="#5b87a8" font-family="Liberation Sans, sans-serif">2</text><text x="3.500" y="23" font-size="7.500" text-anchor="middle" fill="#5b87a8" font-family="Liberation Sans, sans-serif">3</text></svg>
<svg class="i" style="left:1100px;top:96px" width="24" height="24" viewBox="0 0 24 24"><rect x="7" y="2" width="13" height="1" fill="#3a3a38"/><rect x="7" y="5" width="8" height="1" fill="#3a3a38"/><rect x="7" y="10" width="13" height="1" fill="#3a3a38"/><rect x="9" y="13" width="6" height="1" fill="#3a3a38"/><rect x="10" y="18" width="10" height="1" fill="#3a3a38"/><rect x="10" y="21" width="6" height="1" fill="#3a3a38"/><text x="3.500" y="7" font-size="7.500" text-anchor="middle" fill="#3f6f92" font-family="Liberation Sans, sans-serif">1</text><circle cx="4" cy="11.500" r="1.300" fill="#3f6f92"/><path d="M1.500 14.500l8 8M9.500 14.500l-8 8" stroke="#d4536a" stroke-width="1.200"/></svg>
<svg class="i" style="left:1141px;top:96px" width="24" height="24" viewBox="0 0 24 24"><rect x="4" y="1" width="18" height="1" fill="#3a3a38"/><rect x="13" y="6" width="9" height="1" fill="#3a3a38"/><rect x="13" y="11" width="9" height="1" fill="#3a3a38"/><rect x="13" y="16" width="9" height="1" fill="#3a3a38"/><rect x="4" y="21" width="18" height="1" fill="#3a3a38"/><path d="M1.500 11.500h8M6 8l3.500 3.500-3.500 3.500" fill="none" stroke="#4a93bd" stroke-width="1.200"/></svg>
<svg class="i" style="left:1174px;top:96px" width="24" height="24" viewBox="0 0 24 24"><rect x="4" y="1" width="18" height="1" fill="#3a3a38"/><rect x="13" y="6" width="9" height="1" fill="#3a3a38"/><rect x="13" y="11" width="9" height="1" fill="#3a3a38"/><rect x="13" y="16" width="9" height="1" fill="#3a3a38"/><rect x="4" y="21" width="18" height="1" fill="#3a3a38"/><path d="M2 11.500h8M5.500 8l-3.500 3.500 3.500 3.500" fill="none" stroke="#4a93bd" stroke-width="1.200"/></svg>
<svg class="i" style="left:1212px;top:96px" width="24" height="24" viewBox="0 0 24 24"><rect x="11" y="6" width="11" height="1" fill="#3a3a38"/><rect x="11" y="10" width="11" height="1" fill="#3a3a38"/><rect x="11" y="14" width="11" height="1" fill="#3a3a38"/><rect x="11" y="18" width="11" height="1" fill="#3a3a38"/><path d="M5.500 3v18M2.500 6l3-3 3 3M2.500 18l3 3 3-3" fill="none" stroke="#4a93bd" stroke-width="1.200"/></svg>
<svg class="i" style="left:1260px;top:96px" width="24" height="24" viewBox="0 0 24 24"><rect x="2" y="3" width="10" height="1" fill="#3a3a38"/><rect x="2" y="6" width="10" height="1" fill="#3a3a38"/><rect x="2" y="17" width="10" height="1" fill="#3a3a38"/><rect x="2" y="20" width="10" height="1" fill="#3a3a38"/><path d="M17.500 2v8M14.500 5l3-3 3 3M17.500 22v-8M14.500 19l3 3 3-3" fill="none" stroke="#4a93bd" stroke-width="1.200"/></svg>
<svg class="i" style="left:1293px;top:96px" width="24" height="24" viewBox="0 0 24 24"><rect x="2" y="7" width="10" height="1" fill="#c4c4c4"/><rect x="2" y="10" width="10" height="1" fill="#c4c4c4"/><rect x="2" y="13" width="10" height="1" fill="#c4c4c4"/><rect x="2" y="16" width="10" height="1" fill="#c4c4c4"/><path d="M17.500 2v8M14.500 7l3 3 3-3M17.500 22v-8M14.500 17l3-3 3 3" fill="none" stroke="#cbcbcb" stroke-width="1.200"/></svg>
<svg class="i" style="left:37.5px;top:68.5px" width="9" height="6" viewBox="0 0 9 6"><path d="M0.5 0.5h8l-4 4.5z" fill="#111"/></svg>
<svg class="i" style="left:81.5px;top:68.5px" width="9" height="6" viewBox="0 0 9 6"><path d="M0.5 0.5h8l-4 4.5z" fill="#111"/></svg>
<svg class="i" style="left:125.5px;top:68.5px" width="9" height="6" viewBox="0 0 9 6"><path d="M0.5 0.5h8l-4 4.5z" fill="#111"/></svg>
<svg class="i" style="left:443.5px;top:68.5px" width="9" height="6" viewBox="0 0 9 6"><path d="M0.5 0.5h8l-4 4.5z" fill="#111"/></svg>
<svg class="i" style="left:647.0px;top:68.5px" width="9" height="6" viewBox="0 0 9 6"><path d="M0.5 0.5h8l-4 4.5z" fill="#111"/></svg>
<svg class="i" style="left:830.8px;top:68.5px" width="9" height="6" viewBox="0 0 9 6"><path d="M0.5 0.5h8l-4 4.5z" fill="#111"/></svg>
<svg class="i" style="left:875.0px;top:68.5px" width="9" height="6" viewBox="0 0 9 6"><path d="M0.5 0.5h8l-4 4.5z" fill="#111"/></svg>
<svg class="i" style="left:1206.3px;top:68.5px" width="9" height="6" viewBox="0 0 9 6"><path d="M0.5 0.5h8l-4 4.5z" fill="#111"/></svg>
<svg class="i" style="left:350.9px;top:68.5px" width="9" height="6" viewBox="0 0 9 6"><path d="M0.5 0.5h8l-4 4.5z" fill="#a8a8a8"/></svg>
<svg class="i" style="left:487.5px;top:68.5px" width="9" height="6" viewBox="0 0 9 6"><path d="M0.5 0.5h8l-4 4.5z" fill="#a8a8a8"/></svg>
<svg class="i" style="left:604.5px;top:107.5px" width="9" height="6" viewBox="0 0 9 6"><path d="M0.5 0.5h8l-4 4.5z" fill="#111"/></svg>
<svg class="i" style="left:804.8px;top:107.5px" width="9" height="6" viewBox="0 0 9 6"><path d="M0.5 0.5h8l-4 4.5z" fill="#111"/></svg>
<svg class="i" style="left:848.5px;top:107.5px" width="9" height="6" viewBox="0 0 9 6"><path d="M0.5 0.5h8l-4 4.5z" fill="#111"/></svg>
<svg class="i" style="left:1040.5px;top:107.5px" width="9" height="6" viewBox="0 0 9 6"><path d="M0.5 0.5h8l-4 4.5z" fill="#111"/></svg>
<svg class="i" style="left:1084.5px;top:107.5px" width="9" height="6" viewBox="0 0 9 6"><path d="M0.5 0.5h8l-4 4.5z" fill="#111"/></svg>
<svg class="i" style="left:1243.5px;top:107.5px" width="9" height="6" viewBox="0 0 9 6"><path d="M0.5 0.5h8l-4 4.5z" fill="#111"/></svg>
<svg class="i" style="left:3px;top:3px" width="15" height="16" viewBox="0 0 15 16"><path d="M1.500 0h7.500l5 5v9.200a1.500 1.500 0 0 1-1.500 1.500h-11a1.500 1.500 0 0 1-1.500-1.500v-12.700a1.500 1.500 0 0 1 1.500-1.500z" fill="#2277b5"/><path d="M9 0l5 5h-5z" fill="#8fe0f5"/><path d="M2.900 6.600h3M7.200 5.900h3.700v1.800h-3.700zM2.900 9.400h8M2.900 11.500h5" stroke="#e9f5fd" stroke-width="1" fill="#e9f5fd"/></svg>
<svg class="i" style="left:1798px;top:10px" width="11" height="1" viewBox="0 0 11 1"><path d="M0 0.500h11" stroke="#9b9b9b"/></svg>
<svg class="i" style="left:1844px;top:5px" width="11" height="11" viewBox="0 0 11 11"><path d="M2.500 2.500v-2h8v8h-2" fill="none" stroke="#9b9b9b"/><rect x="0.500" y="2.500" width="8" height="8" fill="none" stroke="#9b9b9b"/></svg>
<svg class="i" style="left:1890px;top:5px" width="11" height="11" viewBox="0 0 11 11"><path d="M0.500 0.500l10 10M10.500 0.500l-10 10" stroke="#9b9b9b" stroke-width="1.100"/></svg>
<svg class="i" style="left:1879px;top:27px" width="17" height="18" viewBox="0 0 17 18"><circle cx="8" cy="8.400" r="7.200" fill="#fff" stroke="#2b2b2b" stroke-width="1.200"/><path d="M8 1.200v14.400M0.800 8.400h14.400M2 4.800h12M2 12h12M6 1.600c-1.500 2-2 4-2 6.800s0.500 4.800 2 6.800M10 1.600c1.500 2 2 4 2 6.800s-0.500 4.800-2 6.800" fill="none" stroke="#2b2b2b" stroke-width="0.700"/><rect x="10" y="9.500" width="7" height="8" fill="#fff" opacity="0.900"/><path d="M12.800 9.500v7M10.600 14.200l2.200 2.500 2.200-2.500" fill="none" stroke="#5aa0c4" stroke-width="1"/></svg>
<svg class="i" style="left:1904.5px;top:31.5px" width="9" height="9" viewBox="0 0 9 9"><path d="M0.500 0.500l8 8M8.500 0.500l-8 8" stroke="#222" stroke-width="1.150"/></svg>
<svg class="i" style="left:157.2px;top:105.3px" width="10" height="6" viewBox="0 0 10 6"><path d="M0.700 0.700l4 4 4-4" fill="none" stroke="#4a4a4a" stroke-width="1.200"/></svg>
<svg class="i" style="left:415.6px;top:105.3px" width="10" height="6" viewBox="0 0 10 6"><path d="M0.700 0.700l4 4 4-4" fill="none" stroke="#4a4a4a" stroke-width="1.200"/></svg>
<svg class="i" style="left:482.6px;top:105.3px" width="10" height="6" viewBox="0 0 10 6"><path d="M0.700 0.700l4 4 4-4" fill="none" stroke="#4a4a4a" stroke-width="1.200"/></svg>
<svg class="i" style="left:1894.5px;top:139px" width="11" height="7" viewBox="0 0 11 7"><path d="M0 0.500h11M0 3.500h11M0 6.500h11" stroke="#3a3a38" stroke-width="1.100"/></svg>
<svg class="i" style="left:1888px;top:161px" width="24" height="24" viewBox="0 0 24 24"><rect x="2.500" y="2.500" width="19" height="19" fill="#fdfdfd" stroke="#3a3a38"/><rect x="2.500" y="2.500" width="19" height="3" fill="#6a6a6a" stroke="#3a3a38"/><path d="M6 11.500h12M6 15.500h12" stroke="#3a3a38"/><rect x="12" y="10.300" width="4" height="2.400" rx="1" fill="#5f87a8"/><rect x="8" y="14.300" width="4" height="2.400" rx="1" fill="#5f87a8"/></svg>
<svg class="i" style="left:1888px;top:196px" width="24" height="24" viewBox="0 0 24 24"><path d="M3 16.500l5.500-13h2l5.500 13M5 12.500h9" fill="none" stroke="#3a3a38" stroke-width="1.500"/><path d="M13.500 16.500c2-4.500 5-7.500 8.500-9c1 1 1 1 1 2c-2 3-4.500 6-8 8.500z" fill="#fff" stroke="#3a3a38"/><path d="M14.500 17c-1.500-1-4.500-0.500-6.500 3.500c3 1.500 6.500 0.500 8-2z" fill="#9fcdec" stroke="#3b83b7"/></svg>
<svg class="i" style="left:1888px;top:231px" width="24" height="24" viewBox="0 0 24 24"><path d="M1.500 18.500v-15h5l3 3h10v3" fill="#fef6e8" stroke="#e0a860"/><path d="M1.500 18.500l2.500-9.500h18l-2.500 9.500z" fill="#f9d9a0" stroke="#e0a860" stroke-linejoin="round"/><rect x="9.500" y="9.500" width="12" height="12" fill="#fcfdff" stroke="#2f3f4e" stroke-width="1.200"/><circle cx="12.500" cy="12.500" r="1.200" fill="#f3c58c"/><path d="M10 21l4-4.500 1.500 1.500 2.500-3 3 3.500v2.500z" fill="#83beec" stroke="#3d74a4" stroke-width="0.800"/></svg>
<svg class="i" style="left:1888px;top:266px" width="24" height="24" viewBox="0 0 24 24"><circle cx="12" cy="12" r="9.300" fill="#fbfbfb" stroke="#4a4a4a" stroke-width="1.200"/><path d="M16.500 7.500l-2.500 6.500-6.500 2.500 2.500-6.500z" fill="#4f9ac6"/><circle cx="12" cy="12" r="1.500" fill="#bfe0f4"/></svg>
<svg class="i" style="left:1888px;top:301px" width="24" height="24" viewBox="0 0 24 24"><path d="M4.5 2.5h10l5 5v14h-15z" fill="#fbfbfb" stroke="#3a3a38" stroke-width="1.200"/><path d="M14.5 2.5v5h5" fill="none" stroke="#3a3a38" stroke-width="1.200"/></svg>
<svg class="i" style="left:1888px;top:337px" width="24" height="24" viewBox="0 0 24 24"><path d="M2 8.500c3-5 11-6 15-1" fill="none" stroke="#3a3a38" stroke-width="1.300"/><circle cx="9.500" cy="8.500" r="3.300" fill="#e6f2ee" stroke="#4f8f7f" stroke-width="1.300"/><circle cx="10" cy="8.500" r="1.200" fill="#4f8f7f"/><path d="M13.500 16.500c2-4.500 5-7.500 8.500-9c1 1 1 1 1 2c-2 3-4.500 6-8 8.500z" fill="#fff" stroke="#3a3a38"/><path d="M14.500 17c-1.500-1-4.500-0.500-6.500 3.500c3 1.500 6.500 0.500 8-2z" fill="#9fcdec" stroke="#3b83b7"/></svg>
<svg class="i" style="left:1888px;top:371px" width="24" height="24" viewBox="0 0 24 24"><path d="M4.5 2.5h10l5 5v14h-15z" fill="#fff" stroke="#3a3a38"/><path d="M14.5 2.5v5h5" fill="none" stroke="#3a3a38"/><path d="M7 5.500h5M7 18.500h3" stroke="#7a7a7a"/><path d="M7 9.500h8M7 12.500h7M7 15.500h5" stroke="#f0b070" stroke-dasharray="3 1"/><path d="M12 22.500l1-3.500 8-8 2.500 2.500-8 8z" fill="#7db0dc" stroke="#3f77a8" stroke-linejoin="round"/></svg>
<svg class="i" style="left:13px;top:1024px" width="10" height="10" viewBox="0 0 10 10"><path d="M0.700 0.700h8.600v8.600h-7.300l-1.300-1.300z" fill="#fdf6f6" stroke="#c9364a" stroke-width="1.300" stroke-linejoin="round"/><path d="M2.800 0.700v3h4.400v-3" fill="none" stroke="#c9364a" stroke-width="1.100"/><rect x="3.200" y="6" width="3.600" height="3" fill="#c9364a"/></svg>
<svg class="i" style="left:1410px;top:1025px" width="17" height="10" viewBox="0 0 17 10"><rect x="0.500" y="2.500" width="8" height="5" fill="#dceef6" stroke="#4a7a95"/><path d="M11 0.500h5M13.400 0.500v9M11 9.500h5" stroke="#222" stroke-width="1.200" fill="none"/></svg>
<svg class="i" style="left:1662px;top:1025px" width="9" height="10" viewBox="0 0 9 10"><path d="M0.500 0.500h4.500l2.500 2.500v6.500h-7z" fill="#e9f5fb" stroke="#6fb0d2" stroke-width="1.200"/></svg>
<svg class="i" style="left:1676px;top:1025px" width="19" height="10" viewBox="0 0 19 10"><path d="M0.500 0.500h4.500l2.500 2.500v6.500h-7z" fill="#fff" stroke="#3a3a38" stroke-width="1.200"/><path d="M0.500 0.500h4.500l2.500 2.500v6.500h-7z" transform="translate(10 0)" fill="#fff" stroke="#3a3a38" stroke-width="1.200"/></svg>
<svg class="i" style="left:1700px;top:1025px" width="16" height="10" viewBox="0 0 16 10"><path d="M0.500 9.500v-6.500c0-1.500 1-2.500 2.500-2.500h5v9zM8 0.500h5l2.500 2.500v6.500h-7.500z" fill="#fff" stroke="#3a3a38" stroke-width="1.200"/><path d="M8 0.500v9" stroke="#3a3a38" stroke-width="1.600"/></svg>
<svg class="i" style="left:1736px;top:1024.5px" width="128" height="11" viewBox="0 0 128 11"><path d="M0 5.500h10" stroke="#3a3a38" stroke-width="1.800"/><path d="M15.500 5.500h97" stroke="#8a8a8a" stroke-width="1"/><path d="M47.500 3v5" stroke="#8a8a8a" stroke-width="1.200"/><rect x="62" y="0.500" width="3" height="10" fill="#f4f4f4" stroke="#555"/><path d="M118 5.500h10M123 0.500v10" stroke="#3a3a38" stroke-width="1.800"/></svg>
<svg class="i" style="left:16px;top:1051px" width="16" height="18" viewBox="0 0 16 18"><path d="M0 2.300l6.800-1v7h-6.800zM7.800 1.200l8.200-1.200v8.300h-8.200zM0 9.300h6.800v7l-6.800-1zM7.800 9.300h8.200v8.300l-8.200-1.200z" fill="#fff"/></svg>
<svg class="i" style="left:60px;top:1052px" width="17" height="17" viewBox="0 0 17 17"><circle cx="10.800" cy="6" r="4.800" fill="none" stroke="#2e2e2e" stroke-width="1.200"/><path d="M7.300 9.500l-6.500 6.500" stroke="#2e2e2e" stroke-width="1.300"/></svg>
<svg class="i" style="left:351.5px;top:1051.5px" width="17" height="16" viewBox="0 0 17 16"><path d="M0.500 3v-2.500h10v2.500M0.500 13v2.500h10v-2.500" fill="none" stroke="#fff" stroke-width="1.200"/><rect x="1.500" y="4.500" width="9" height="7" fill="none" stroke="#fff" stroke-width="1.200"/><path d="M14.500 0v3.500M14.500 8.500v7.500" stroke="#fff" stroke-width="1.200"/><rect x="13" y="4.500" width="3" height="3" fill="#fff"/></svg>
<svg class="i" style="left:399.5px;top:1047.5px" width="24" height="24" viewBox="0 0 24 24"><defs><linearGradient id="eg1" x1="0" y1="0.200" x2="1" y2="0.600"><stop offset="0" stop-color="#3cb8ea"/><stop offset="0.550" stop-color="#33c6a8"/><stop offset="1" stop-color="#6fe05a"/></linearGradient><linearGradient id="eg2" x1="0.200" y1="0" x2="0.500" y2="1"><stop offset="0" stop-color="#2aa0ea"/><stop offset="1" stop-color="#1557b0"/></linearGradient></defs><circle cx="12" cy="12" r="11.800" fill="url(#eg1)"/><path d="M0.300 13c0-7 4.700-11.500 10.700-12c-5 2-7.500 6.500-6.500 11.500c1 5 5.500 8 10.500 7.500c3-0.300 5.500-1.700 7-3.500c-2 4.500-6 7.300-10 7.300c-6.500 0-11.700-4.800-11.700-10.800z" fill="url(#eg2)"/><path d="M4.500 12.500c-0.500-4.500 3.500-7.500 7.500-7c4 0.500 6 3.500 5.500 6c-0.500 2-2.500 2.800-4 2.500c1-2 0-4.500-2.500-4.500c-3.500 0-5 3.500-4 7c1 3 4.500 4.500 8 3.500c-5 0.500-9.500-2.500-10.500-7.500z" fill="#173d6e"/></svg>
<svg class="i" style="left:449px;top:1050px" width="22" height="18" viewBox="0 0 22 18"><path d="M0 2.500h8l2 2h12v13.500h-22z" fill="#e8b93a"/><path d="M0 5.500h22v12.500h-22z" fill="#f8d763"/><path d="M0 2.500h8l1.500 1.500-1.500 1.500h-8z" fill="#f4c94a"/><path d="M4.500 18v-7h13v7h-3.500v-4h-6v4z" fill="#4d8fcf"/><path d="M8 18v-4h6v4z" fill="#e9c85a"/></svg>
<svg class="i" style="left:497px;top:1049px" width="23" height="23" viewBox="0 0 23 23"><path d="M6.500 5v-2.500a1.500 1.500 0 0 1 1.500-1.500h7a1.500 1.500 0 0 1 1.500 1.500v2.500" fill="none" stroke="#5fb0dc" stroke-width="1.700"/><path d="M0.500 5h22v15a3 3 0 0 1-3 3h-16a3 3 0 0 1-3-3z" fill="#f3f5f8"/><rect x="7" y="9" width="4" height="4" fill="#e2453c"/><rect x="12" y="9" width="4" height="4" fill="#7cbb42"/><rect x="7" y="14" width="4" height="4" fill="#2aa4e8"/><rect x="12" y="14" width="4" height="4" fill="#f6b83a"/></svg>
<svg class="i" style="left:545.5px;top:1047px" width="25" height="24" viewBox="0 0 25 24"><path d="M0.500 9l12-8.500 12 8.500z" fill="#1f63b8"/><path d="M0.500 9h24v14.500h-24z" fill="#2aa7ea"/><path d="M0.500 23.500l12-9.500 12 9.500z" fill="#3fb6ef"/><path d="M2.500 9h20l-10 8z" fill="#f4f9fd"/></svg>
<svg class="i" style="left:595.5px;top:1048.5px" width="25" height="25" viewBox="0 0 25 25"><circle cx="11.500" cy="11.500" r="10.700" fill="#2a2a2e" stroke="#d8d8d8" stroke-width="1.300"/><path d="M7 3.500c-1.500 4 0.500 7 4.500 7.500M11.500 11c3-2 6.500-1.500 8 1M11.500 11c-1 3.500-3 5.500-6.500 5.500M11.500 11c1 3 0.500 6-1.500 8.500" fill="none" stroke="#d0d0d0" stroke-width="1.300"/><circle cx="18" cy="17.500" r="5.800" fill="#f00000"/></svg>
<svg class="i" style="left:646px;top:1048px" width="21" height="24" viewBox="0 0 21 24"><defs><linearGradient id="wg" x1="0" y1="0" x2="1" y2="1"><stop offset="0" stop-color="#3a93d8"/><stop offset="1" stop-color="#1a63ae"/></linearGradient></defs><path d="M1 0h13l7 7v16a1 1 0 0 1-1 1h-19a1 1 0 0 1-1-1v-22a1 1 0 0 1 1-1z" fill="url(#wg)"/><path d="M14 0l7 7z" fill="#7fd0ee"/><path d="M13 0h2l6 6v2.500z" fill="#6cc3e6"/><path d="M5 12h4M10.500 11h6v2.500h-6zM5 15.500h11.500M5 18.500h4" stroke="#eaf4fc" stroke-width="1.400" fill="#eaf4fc"/></svg>
<svg class="i" style="left:1485px;top:1052px" width="26" height="19" viewBox="0 0 26 19"><defs><linearGradient id="cg" x1="0" y1="0" x2="0" y2="1"><stop offset="0" stop-color="#e9eefb"/><stop offset="1" stop-color="#a9b9e6"/></linearGradient></defs><path d="M5 17.500a4.500 4.500 0 0 1 0-9a7 7 0 0 1 13-1.500a5.300 5.300 0 0 1 2 10.500z" fill="url(#cg)"/><circle cx="18.500" cy="3" r="5.800" fill="#d62b35"/></svg>
<svg class="i" style="left:1683px;top:1056px" width="13" height="8" viewBox="0 0 13 8"><path d="M0.700 7l5.500-5.500 5.500 5.500" fill="none" stroke="#fff" stroke-width="1.300"/></svg>
<svg class="i" style="left:1708px;top:1052px" width="12" height="16" viewBox="0 0 12 16"><rect x="0.600" y="4.600" width="7.500" height="6.500" rx="1.500" fill="none" stroke="#fff" stroke-width="1.200"/><path d="M8.300 7l2.700-1.800v5.300l-2.700-1.800" fill="none" stroke="#fff" stroke-width="1.200"/><path d="M2 2.500c2-2 6-2 8 0M2 13.500c2 2 6 2 8 0" fill="none" stroke="#fff" stroke-width="1.100"/></svg>
<svg class="i" style="left:1730.5px;top:1051.5px" width="12" height="17" viewBox="0 0 12 17"><rect x="3" y="0" width="6" height="10.500" rx="1.800" fill="#f4f6fb"/><path d="M0.700 7v1.500a5.300 5.300 0 0 0 10.600 0v-1.500M6 13.800v2.200M3 16h6" fill="none" stroke="#fff" stroke-width="1.200"/></svg>
<svg class="i" style="left:1753px;top:1053.5px" width="17" height="14" viewBox="0 0 17 14"><path d="M5.600 1.600h10.400v9h-11.500v-6" fill="none" stroke="#fff" stroke-width="1.200"/><rect x="0.600" y="0.600" width="5" height="4" fill="none" stroke="#fff" stroke-width="1.100"/><path d="M2.500 4.600v8.400M9 10.600v2.400M1 13.400h11" fill="none" stroke="#fff" stroke-width="1.200"/></svg>
<svg class="i" style="left:1777px;top:1052.5px" width="17" height="15" viewBox="0 0 17 15"><path d="M0.600 5h2.500l3.500-3.500v12l-3.500-3.500h-2.500z" fill="none" stroke="#fff" stroke-width="1.100" stroke-linejoin="round"/><path d="M9 5c1.300 1.500 1.300 3.500 0 5M11.500 3c2.300 2.700 2.300 6.300 0 9M14 1c3.300 4 3.300 9 0 13" fill="none" stroke="#fff" stroke-width="1.100"/></svg>
<svg class="i" style="left:1879px;top:1052px" width="16" height="16" viewBox="0 0 16 16"><path d="M0.600 0.600h14.800v11.400h-5l-2.400 2.600-2.400-2.600h-5z" fill="none" stroke="#fff" stroke-width="1.200" stroke-linejoin="round"/></svg>
<span class="t" style="left:22.3px;top:4.00px;font-size:12px;line-height:16px;color:#9a9a9a;letter-spacing:-0.058px;">Sin título 1 – LibreOffice Writer</span>
<span class="t" style="left:7.3px;top:29.00px;font-size:12px;line-height:16px;color:#000;letter-spacing:0.347px;"><u>A</u>rchivo</span>
<span class="t" style="left:64.3px;top:29.00px;font-size:12px;line-height:16px;color:#000;letter-spacing:0.148px;"><u>E</u>ditar</span>
<span class="t" style="left:110.3px;top:29.00px;font-size:12px;line-height:16px;color:#000;letter-spacing:0.042px;"><u>V</u>er</span>
<span class="t" style="left:143.3px;top:29.00px;font-size:12px;line-height:16px;color:#000;letter-spacing:-0.084px;"><u>I</u>nsertar</span>
<span class="t" style="left:198.3px;top:29.00px;font-size:12px;line-height:16px;color:#000;letter-spacing:0.069px;"><u>F</u>ormato</span>
<span class="t" style="left:258.3px;top:29.00px;font-size:12px;line-height:16px;color:#000;letter-spacing:-0.207px;">E<u>s</u>tilos</span>
<span class="t" style="left:307.3px;top:29.00px;font-size:12px;line-height:16px;color:#000;letter-spacing:-0.147px;"><u>T</u>abla</span>
<span class="t" style="left:350.3px;top:29.00px;font-size:12px;line-height:16px;color:#000;letter-spacing:0.082px;">Form<u>u</u>lario</span>
<span class="t" style="left:423.3px;top:29.00px;font-size:12px;line-height:16px;color:#000;letter-spacing:-0.085px;"><u>H</u>erramientas</span>
<span class="t" style="left:509.3px;top:29.00px;font-size:12px;line-height:16px;color:#000;letter-spacing:0.009px;">Ve<u>n</u>tana</span>
<span class="t" style="left:568.3px;top:29.00px;font-size:12px;line-height:16px;color:#000;letter-spacing:0.322px;">Ay<u>u</u>da</span>
<span class="t" style="left:7.3px;top:101.00px;font-size:12px;line-height:16px;color:#000;letter-spacing:-0.103px;width:146.5px;overflow:hidden;">Estilo de párrafo predeterminado</span>
<span class="t" style="left:249.3px;top:101.00px;font-size:12px;line-height:16px;color:#000;letter-spacing:-0.108px;">Liberation Serif</span>
<span class="t" style="left:440.3px;top:101.00px;font-size:12px;line-height:16px;color:#000;letter-spacing:0.349px;">20 pt</span>
<span class="t" style="left:40.3px;top:1023.00px;font-size:12px;line-height:16px;color:#000;letter-spacing:-0.330px;">Página 1 de 1</span>
<span class="t" style="left:305.3px;top:1023.00px;font-size:12px;line-height:16px;color:#000;letter-spacing:-0.289px;">0 palabras, 0 caracteres</span>
<span class="t" style="left:725.3px;top:1023.00px;font-size:12px;line-height:16px;color:#000;letter-spacing:-0.056px;">Estilo de página predeterminado</span>
<span class="t" style="left:1155.3px;top:1023.00px;font-size:12px;line-height:16px;color:#000;letter-spacing:-0.353px;">Español (España)</span>
<span class="t" style="left:1880.3px;top:1023.00px;font-size:12px;line-height:16px;color:#000;letter-spacing:0.000px;transform:scaleX(0.8551);transform-origin:0 50%;">100 %</span>
<span class="t" style="left:87.8px;top:1051.00px;font-size:15px;line-height:20px;color:#3c3c3c;letter-spacing:-0.617px;">Buscar</span>
<span class="t" style="left:1517.3px;top:1052.00px;font-size:13px;line-height:16px;color:#fff;letter-spacing:0.018px;">12°C</span>
<span class="t" style="left:1554.3px;top:1052.00px;font-size:13px;line-height:16px;color:#fff;letter-spacing:0.485px;">Mayorm. nubla...</span>
<span class="t" style="left:1818.3px;top:1042.50px;font-size:12px;line-height:16px;color:#fff;letter-spacing:-0.635px;">11:14</span>
<span class="t" style="left:1802.3px;top:1060.50px;font-size:12px;line-height:16px;color:#fff;letter-spacing:-0.218px;">30/10/2023</span>
<span class="t" style="left:1499.8px;top:1046.50px;font-size:9px;line-height:16px;color:#fff;letter-spacing:0.000px;font-weight:700;">1</span>
</div>

</body></html>
